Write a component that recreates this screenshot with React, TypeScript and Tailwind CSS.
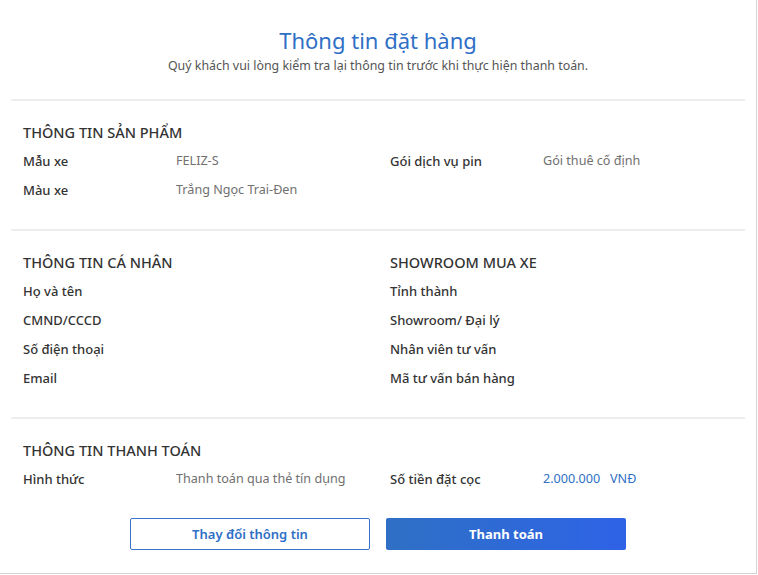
const font = { fontFamily: "'Noto Sans', Lato, sans-serif" };

type Row = [string, string?];

function Rows({ rows }: { rows: Row[] }) {
  return (
    <div className="mt-[5px] flex flex-col">
      {rows.map(([label, value]) => (
        <div key={label} className="grid h-[29px] grid-cols-[153px_1fr] items-center text-[13px]">
          <span className="font-medium text-[#333]">{label}</span>
          <span className="text-[12.6px] text-[#707070]">{value ?? ""}</span>
        </div>
      ))}
    </div>
  );
}

function Heading({ children }: { children: React.ReactNode }) {
  return <h2 className="h-[20px] text-[14.5px] font-medium uppercase leading-[20px] text-[#333]">{children}</h2>;
}

function Divider() {
  return <div className="mx-[11px] h-[2px] bg-[#ededed]" />;
}

export default function App() {
  return (
    <div style={font} className="h-[575px] w-[758px] bg-white">
      <div className="h-[574px] w-[757px] border-b border-r border-[#d4d4d4] bg-white">
        {/* Header */}
        <div className="pt-[26px] text-center">
          <h1 className="text-[22px] leading-[28px] text-[#2f6fc6]">Thông tin đặt hàng</h1>
          <p className="mt-[3px] text-[12.4px] leading-[18px] text-[#555]">
            Quý khách vui lòng kiểm tra lại thông tin trước khi thực hiện thanh toán.
          </p>
        </div>
        <div className="mt-[24px]">
          <Divider />
        </div>

        {/* Product */}
        <div className="px-[23px] pb-[24px] pt-[21px]">
          <Heading>Thông tin sản phẩm</Heading>
          <div className="grid grid-cols-[367px_1fr]">
            <Rows rows={[["Mẫu xe", "FELIZ-S"], ["Màu xe", "Trắng Ngọc Trai-Đen"]]} />
            <Rows rows={[["Gói dịch vụ pin", "Gói thuê cố định"]]} />
          </div>
        </div>
        <Divider />

        {/* Personal + showroom */}
        <div className="grid grid-cols-[367px_1fr] px-[23px] pb-[24px] pt-[21px]">
          <div>
            <Heading>Thông tin cá nhân</Heading>
            <Rows rows={[["Họ và tên"], ["CMND/CCCD"], ["Số điện thoại"], ["Email"]]} />
          </div>
          <div>
            <Heading>Showroom mua xe</Heading>
            <Rows rows={[["Tỉnh thành"], ["Showroom/ Đại lý"], ["Nhân viên tư vấn"], ["Mã tư vấn bán hàng"]]} />
          </div>
        </div>
        <Divider />

        {/* Payment */}
        <div className="px-[23px] pt-[21px]">
          <Heading>Thông tin thanh toán</Heading>
          <div className="grid grid-cols-[367px_1fr]">
            <Rows rows={[["Hình thức", "Thanh toán qua thẻ tín dụng"]]} />
            <div className="mt-[5px] grid h-[29px] grid-cols-[153px_1fr] items-center text-[13px]">
              <span className="font-medium text-[#333]">Số tiền đặt cọc</span>
              <span className="text-[12.6px] text-[#2f6fc6]">2.000.000&nbsp;&nbsp; VNĐ</span>
            </div>
          </div>
        </div>

        <div className="mt-[24px] flex justify-center gap-[16px]">
          <button
            type="button"
            className="h-[32px] w-[240px] rounded-[2px] border border-[#3a74c8] bg-white pt-[2px] text-[13px] font-semibold text-[#2f6fc6]"
          >
            Thay đổi thông tin
          </button>
          <button
            type="button"
            className="h-[32px] w-[240px] rounded-[2px] bg-gradient-to-r from-[#2f70c5] to-[#2f62e6] pt-[2px] text-[13px] font-bold text-white"
          >
            Thanh toán
          </button>
        </div>
      </div>
    </div>
  );
}
